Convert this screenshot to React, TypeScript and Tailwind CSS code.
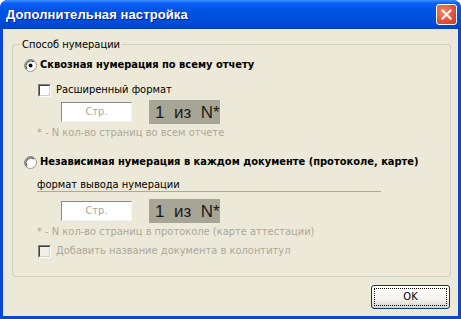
import React from "react";

const F = { fontFamily: "Tahoma, 'DejaVu Sans Condensed', 'Liberation Sans', sans-serif" } as React.CSSProperties;

function Radio({ checked }: { checked?: boolean }) {
  return (
    <svg width="13" height="13" viewBox="0 0 13 13" className="shrink-0">
      <circle cx="6.5" cy="6.5" r="6" fill="#fff" stroke="#9c9a8c" strokeWidth="1" />
      <path d="M2.3 10.7 A6 6 0 0 1 10.7 2.3" fill="none" stroke="#808080" strokeWidth="1" />
      <path d="M3 10 A5 5 0 0 1 10 3" fill="none" stroke="#404040" strokeWidth="1" />
      {checked && <circle cx="6.5" cy="6.5" r="2" fill="#000" />}
    </svg>
  );
}

function Check({ disabled }: { disabled?: boolean }) {
  return (
    <div className="w-[13px] h-[13px] shrink-0 border-t border-l border-t-[#808080] border-l-[#808080] border-b border-r border-b-white border-r-white">
      <div
        className={`w-full h-full border-t border-l border-t-[#404040] border-l-[#404040] border-b border-r border-b-[#d4d0c8] border-r-[#d4d0c8] ${disabled ? "bg-[#f1efe2]" : "bg-white"}`}
      />
    </div>
  );
}

function FormatRow() {
  return (
    <div className="flex items-center ml-[48px] h-[24px]">
      <div className="w-[71px] h-[20px] bg-white border-t border-l border-t-[#8a8a8a] border-l-[#8a8a8a] border-b border-r border-b-[#f4f4f4] border-r-[#f4f4f4] flex items-center justify-center text-[11px] text-[#aca899]">
        Стр.
      </div>
      <div
        className="ml-[17px] w-[71px] h-[24px] bg-[#a7a696] flex items-center pl-[6px] text-[17px] leading-none text-[#1a1a1a] whitespace-nowrap"
        style={{ fontFamily: "'Liberation Sans', Arial, sans-serif" }}
      >
        1&nbsp;&nbsp;из&nbsp;&nbsp;N*
      </div>
    </div>
  );
}

export default function App() {
  return (
    <div className="w-[461px] h-[319px] bg-[#0a46d8] rounded-t-[8px] flex flex-col overflow-hidden" style={F}>
      <div className="h-[29px] shrink-0 flex items-center justify-between pl-[6px] pr-[4px] bg-[linear-gradient(180deg,#3c8eff_0%,#0a5ef6_12%,#0054e3_35%,#0050e0_60%,#0049d4_85%,#0240c0_100%)]">
        <span
          className="text-white text-[13px] font-bold tracking-[0.1px]"
          style={{ fontFamily: "'Liberation Sans', 'DejaVu Sans', sans-serif", textShadow: "1px 1px 0 #0a1e8c" }}
        >
          Дополнительная настройка
        </span>
        <div className="w-[21px] h-[21px] rounded-[3px] border border-white bg-[radial-gradient(circle_at_35%_35%,#f08a6a_0%,#e0563a_55%,#c4391e_100%)] flex items-center justify-center">
          <svg width="11" height="11" viewBox="0 0 11 11">
            <path d="M1.5 1.5 L9.5 9.5 M9.5 1.5 L1.5 9.5" stroke="#fff" strokeWidth="2" strokeLinecap="square" />
          </svg>
        </div>
      </div>
      <div className="flex-1 mx-[3px] mb-[3px] bg-[#ece9d8] flex flex-col text-[11px] text-black">
        <fieldset className="mt-[9px] ml-[9px] mr-[7px] h-[239px] border border-[#d0d0bf] rounded-[3px] pl-0 pr-0">
          <legend className="ml-[7px] px-[2px] leading-[13px]">Способ нумерации</legend>
          <div className="flex items-center gap-[3px] ml-[11px] mt-[8px] h-[13px]">
            <Radio checked />
            <span className="font-bold">Сквозная нумерация по всему отчету</span>
          </div>
          <div className="flex items-center gap-[5px] ml-[25px] mt-[12px] h-[13px]">
            <Check />
            <span>Расширенный формат</span>
          </div>
          <div className="mt-[3px]">
            <FormatRow />
          </div>
          <div className="ml-[24px] mt-[2px] h-[13px] leading-[13px] text-[#aca899]">* - N кол-во страниц во всем отчете</div>
          <div className="flex items-center gap-[3px] ml-[11px] mt-[17px] h-[13px]">
            <Radio />
            <span className="font-bold">Независимая нумерация в каждом документе (протоколе, карте)</span>
          </div>
          <div className="ml-[24px] mt-[9px] w-[344px] h-[14px] leading-[13px] border-b border-[#aca899]">формат вывода нумерации</div>
          <div className="mt-[7px]">
            <FormatRow />
          </div>
          <div className="ml-[24px] mt-[2px] h-[13px] leading-[13px] text-[#aca899]">* - N кол-во страниц в протоколе (карте аттестации)</div>
          <div className="flex items-center gap-[5px] ml-[25px] mt-[7px] h-[13px]">
            <Check disabled />
            <span className="text-[#aca899]">Добавить название документа в колонтитул</span>
          </div>
        </fieldset>
        <div className="flex justify-end mr-[8px] mt-[8px]">
          <div className="w-[79px] h-[24px] rounded-[3px] border border-[#003c74] bg-[linear-gradient(180deg,#ffffff_0%,#f4f3ee_60%,#d6d0c5_100%)] p-[2px]">
            <div className="w-full h-full border border-dotted border-black flex items-center justify-center">
              OK
            </div>
          </div>
        </div>
      </div>
    </div>
  );
}
